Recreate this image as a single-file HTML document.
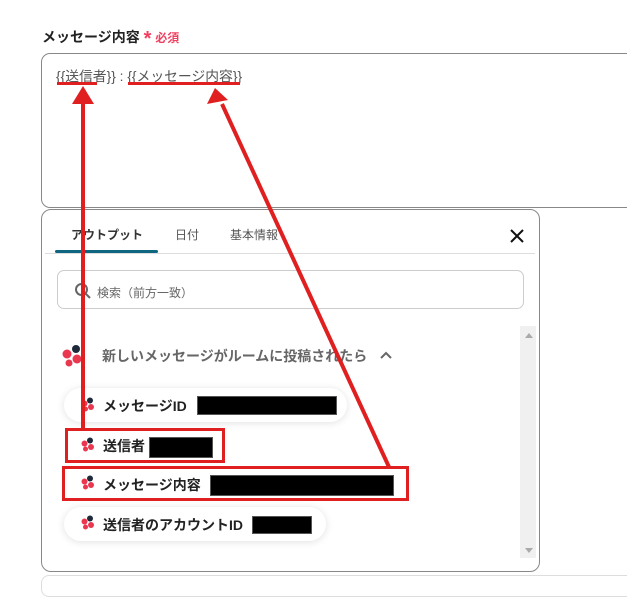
<!DOCTYPE html>
<html><head><meta charset="utf-8"><style>
body{margin:0;width:627px;height:587px;background:#fff;position:relative;overflow:hidden;font-family:"Liberation Sans","Noto Sans CJK JP",sans-serif}
.a{position:absolute}
.pill{position:absolute;background:#fff;border-radius:17px;box-shadow:0 1px 8px rgba(0,0,0,.12);height:34px}
.pt{position:absolute;top:8px;font-size:14px;font-weight:bold;color:#222;white-space:nowrap}
.blk{position:absolute;background:#000;border:1px solid #555}
.rb{position:absolute;border:3px solid #e02020;box-sizing:border-box}
</style></head><body>
<div class="a" style="left:42px;top:25px;font-size:14px;font-weight:bold;color:#222">メッセージ内容 <span style="color:#f04060;font-size:20px;position:relative;top:3px">*</span> <span style="color:#f04060;font-size:12px">必須</span></div>
<div class="a" style="left:41px;top:53px;width:600px;height:155px;border:1px solid #888;border-radius:9px;box-sizing:border-box"></div>
<div class="a" style="left:56px;top:65px;font-size:13.8px;color:#555">{{送信者}} : {{メッセージ内容}}</div>
<div class="a" style="left:41px;top:575px;width:600px;height:20px;border:1px solid #ddd;border-radius:8px"></div>
<div class="a" style="left:41px;top:209px;width:499px;height:363px;border:1px solid #888;border-radius:10px;background:#fff;box-sizing:border-box"></div>
<div class="a" style="left:45px;top:253px;width:490px;height:1px;background:#ddd"></div>
<div class="a" style="left:55px;top:250px;width:103px;height:3px;background:#0e6680;border-radius:2px"></div>
<div class="a" style="left:71px;top:226px;font-size:12px;font-weight:bold;color:#333">アウトプット</div>
<div class="a" style="left:175px;top:226px;font-size:12px;color:#555">日付</div>
<div class="a" style="left:230px;top:226px;font-size:12px;color:#555">基本情報</div>
<svg class="a" style="left:509px;top:228px" width="16" height="16"><path d="M2 2L14 14M14 2L2 14" stroke="#111" stroke-width="2"/></svg>
<div class="a" style="left:57px;top:270px;width:467px;height:39px;border:1px solid #ccc;border-radius:7px;box-sizing:border-box"></div>
<svg class="a" style="left:74px;top:282px" width="18" height="18"><circle cx="7.5" cy="7.5" r="5.5" fill="none" stroke="#666" stroke-width="2"/><path d="M11.5 11.5L16 16" stroke="#666" stroke-width="2"/></svg>
<div class="a" style="left:97px;top:284px;font-size:12px;color:#666">検索（前方一致）</div>
<div class="a" style="left:520px;top:326px;width:16px;height:232px;background:#f0f0f0"></div>
<div class="a" style="left:525px;top:333px;border:4px solid transparent;border-bottom:5px solid #aaa;border-top:0"></div>
<div class="a" style="left:525px;top:548px;border:4px solid transparent;border-top:5px solid #aaa;border-bottom:0"></div>
<svg class="a" style="left:60px;top:343px" width="24" height="24"><circle cx="16" cy="6" r="4" fill="#1e2a3a"/><circle cx="7" cy="11" r="4.5" fill="#e8374f"/><circle cx="17" cy="16" r="4.5" fill="#e8374f"/><circle cx="9" cy="20" r="3.5" fill="#e8374f"/></svg>
<div class="a" style="left:102px;top:346px;font-size:14px;font-weight:bold;color:#666">新しいメッセージがルームに投稿されたら</div>
<svg class="a" style="left:380px;top:350px" width="12" height="10"><path d="M1 8L6 3L11 8" fill="none" stroke="#666" stroke-width="2"/></svg>
<div class="pill" style="left:64px;top:388px;width:283px"></div>
<div class="pill" style="left:64px;top:507px;width:262px"></div>
<div class="a" style="left:65px;top:429px;width:159px;height:33px;background:#fff"></div>
<div class="a" style="left:63px;top:467px;width:345px;height:33px;background:#fff"></div>
<svg width="0" height="0" style="position:absolute"><defs><g id="ic"><circle cx="9" cy="3.5" r="3" fill="#1e2a3a"/><circle cx="3.5" cy="6.5" r="3" fill="#e8374f"/><circle cx="10" cy="10" r="3" fill="#e8374f"/><circle cx="4.5" cy="12" r="2.5" fill="#e8374f"/></g></defs></svg>
<svg class="a" style="left:81px;top:397px" width="15" height="16"><use href="#ic"/></svg>
<svg class="a" style="left:81px;top:437px" width="15" height="16"><use href="#ic"/></svg>
<svg class="a" style="left:81px;top:475px" width="15" height="16"><use href="#ic"/></svg>
<svg class="a" style="left:81px;top:515px" width="15" height="16"><use href="#ic"/></svg>
<div class="pt" style="left:103px;top:396px">メッセージID</div>
<div class="pt" style="left:103px;top:436px">送信者</div>
<div class="pt" style="left:103px;top:475px">メッセージ内容</div>
<div class="pt" style="left:103px;top:515px">送信者のアカウントID</div>
<div class="blk" style="left:197px;top:396px;width:138px;height:17px"></div>
<div class="blk" style="left:149px;top:437px;width:62px;height:19px"></div>
<div class="blk" style="left:210px;top:475px;width:182px;height:19px"></div>
<div class="blk" style="left:252px;top:516px;width:58px;height:16px"></div>
<div class="rb" style="left:65px;top:428px;width:160px;height:35px"></div>
<div class="rb" style="left:62px;top:466px;width:347px;height:35px"></div>
<div class="a" style="left:57px;top:82px;width:40px;height:3px;background:#e02020"></div>
<div class="a" style="left:128px;top:82px;width:112px;height:3px;background:#e02020"></div>
<svg class="a" style="left:0;top:0" width="627" height="587">
<path d="M83 429L83 100" stroke="#e02020" stroke-width="4"/>
<path d="M72 104L83 86L94 104Z" fill="#e02020"/>
<path d="M389 467L222 104" stroke="#e02020" stroke-width="4"/>
<path d="M207 104L215 88L228 100Z" fill="#e02020"/>
</svg>
</body></html>
